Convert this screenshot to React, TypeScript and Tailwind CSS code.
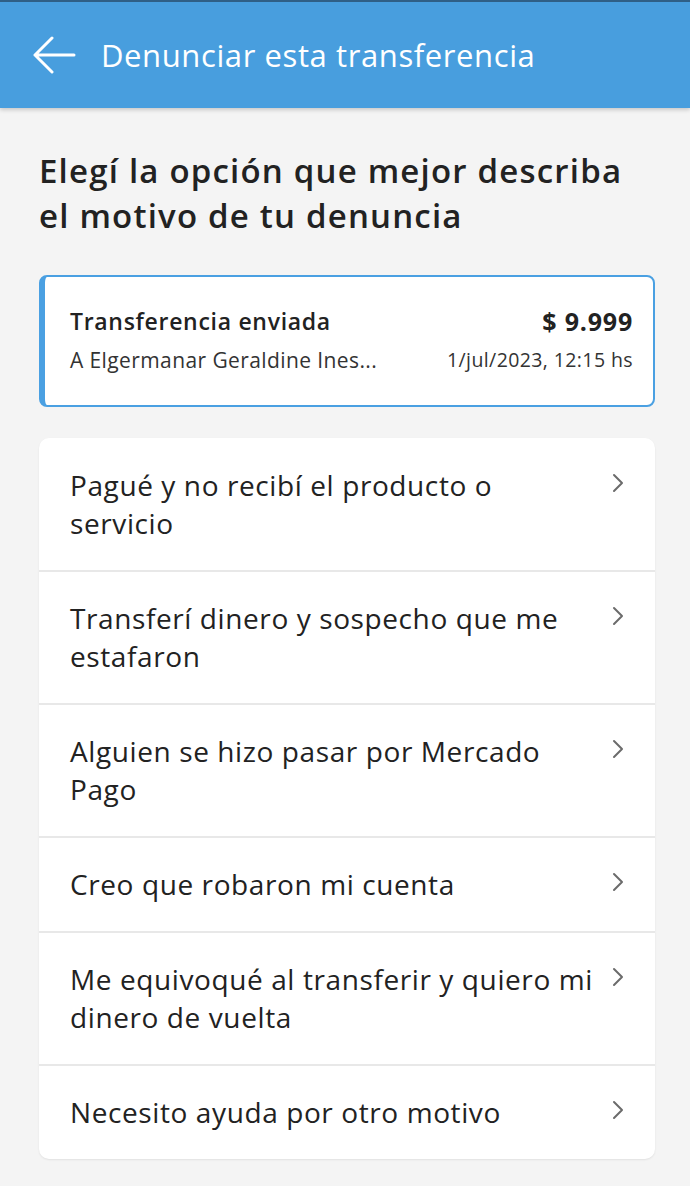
const OPCIONES = [
  "Pagué y no recibí el producto o servicio",
  "Transferí dinero y sospecho que me estafaron",
  "Alguien se hizo pasar por Mercado Pago",
  "Creo que robaron mi cuenta",
  "Me equivoqué al transferir y quiero mi dinero de vuelta",
  "Necesito ayuda por otro motivo",
];

function Chevron() {
  return (
    <svg width="14" height="22" viewBox="0 0 14 22" className="shrink-0">
      <path d="M3 3 L11 11 L3 19" fill="none" stroke="#6b6b6b" strokeWidth="2" strokeLinecap="round" strokeLinejoin="round" />
    </svg>
  );
}

export default function App() {
  return (
    <div
      className="min-h-[1186px] w-[690px] bg-[#f4f4f4] text-[#222]"
      style={{ fontFamily: "'Open Sans', sans-serif" }}
    >
      <header className="flex h-[108px] items-center border-t-2 border-[#2f5f86] bg-[#489ede] pl-[32px] shadow-[0_2px_4px_rgba(0,0,0,0.18)]">
        <svg width="44" height="38" viewBox="0 0 44 38" className="mr-[25px]">
          <path d="M42 19 H3 M20 2 L3 19 L20 36" fill="none" stroke="white" strokeWidth="3" strokeLinecap="round" strokeLinejoin="round" />
        </svg>
        <h1 className="text-[31px] font-normal tracking-[0.6px] text-white">Denunciar esta transferencia</h1>
      </header>

      <main className="pl-[39px] pr-[35px] pt-[40px]">
        <h2 className="w-[600px] text-[33px] font-semibold leading-[45px] tracking-[1.2px] text-[#222]">
          Elegí la opción que mejor describa el motivo de tu denuncia
        </h2>

        <div className="mt-[37px] h-[132px] rounded-[8px] border-2 border-l-[6px] border-[#4aa0e2] bg-white pl-[25px] pr-[20px] pt-[29px]">
          <div className="flex items-center justify-between leading-[30px]">
            <span className="text-[23px] font-semibold tracking-[0.7px]">Transferencia enviada</span>
            <span className="text-[25px] font-bold tracking-[0.8px]">$ 9.999</span>
          </div>
          <div className="mt-[11px] flex items-center justify-between leading-[26px] tracking-[0.4px] text-[#333]">
            <span className="text-[21px]">A Elgermanar Geraldine Ines...</span>
            <span className="text-[19.5px]">1/jul/2023, 12:15 hs</span>
          </div>
        </div>

        <ul className="mt-[31px] overflow-hidden rounded-[10px] bg-white shadow-[0_1px_2px_rgba(0,0,0,0.08)]">
          {OPCIONES.map((op, i) => (
            <li
              key={op}
              className={`flex items-start justify-between pb-[28px] pl-[31px] pr-[30px] ${i > 0 ? "border-t-2 border-[#e8e8e8] pt-[27px]" : "pt-[28px]"}`}
            >
              <span className="w-[530px] text-[28px] leading-[38px] tracking-[0.6px]">{op}</span>
              <span className="pt-[6px]">
                <Chevron />
              </span>
            </li>
          ))}
        </ul>
      </main>
    </div>
  );
}
